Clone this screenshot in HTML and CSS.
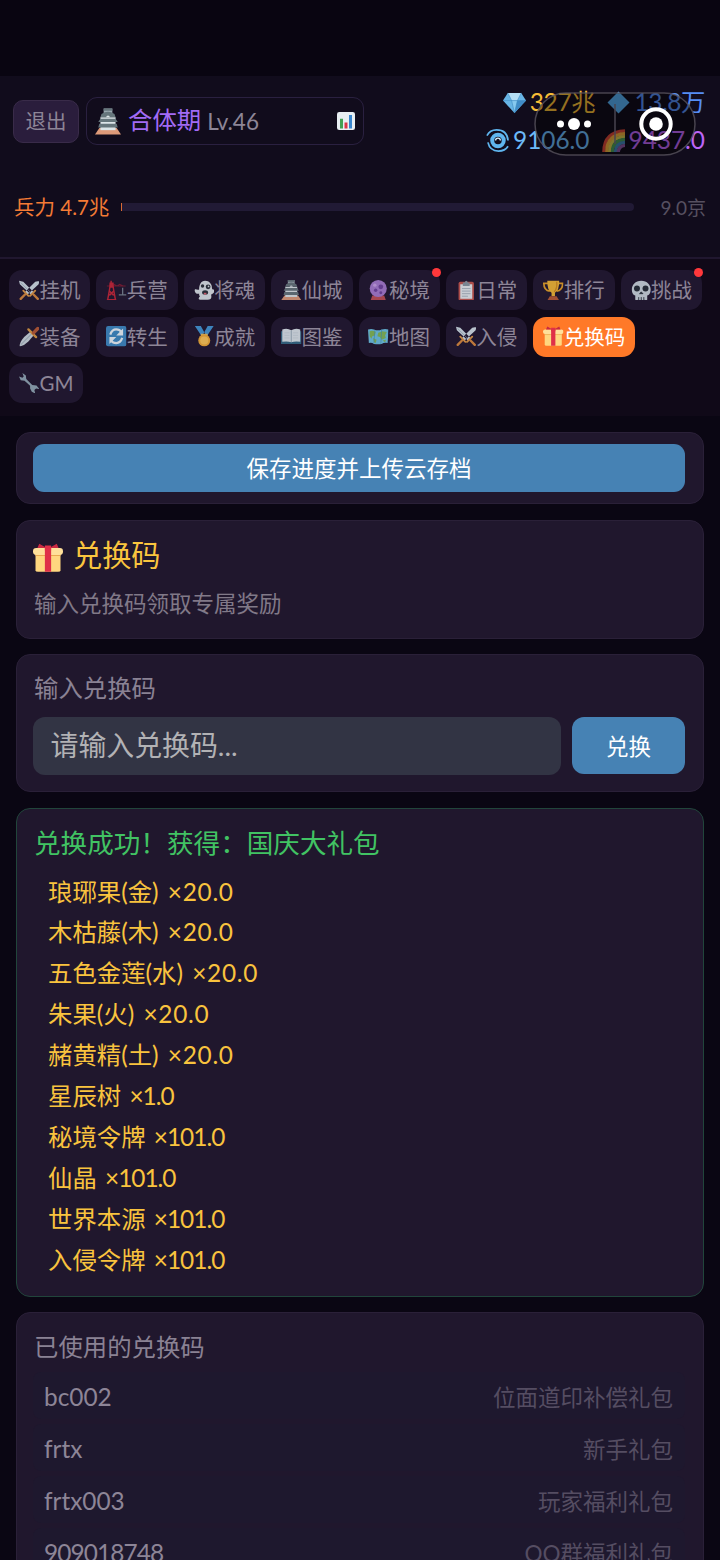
FILE: index.html
```html
<!DOCTYPE html>
<html lang="zh-CN">
<head>
<meta charset="utf-8">
<title>兑换码</title>
<link rel="stylesheet" href="styles.css">
</head>
<body>
<svg class="sprite" aria-hidden="true">
  <symbol id="swords" viewBox="0 0 24 24"><path d="M0 1l5 1 12 12-3 3L1 5zM24 1l-5 1L7 14l3 3L23 5z" fill="#d3e0e8"/><path d="M2 3l12 12" stroke="#8fa5b2" stroke-width=".800"/><path d="M13 18.500l6-6M11 18.500l-6-6" stroke="#e09a48" stroke-width="2.2" stroke-linecap="round"/><path d="M17 17l5 5M7 17l-5 5" stroke="#d98a3e" stroke-width="2.800" stroke-linecap="round"/></symbol>
  <symbol id="crane" viewBox="0 0 24 24"><path d="M6 1v4M2 23L5 6h3l3 17M4 18l5-5M9 18l-5-5M1 23h11" fill="none" stroke="#c52739" stroke-width="1.700"/><path d="M1 7h22M9 5l4 2 3-2 4 2" stroke="#7d1c33" stroke-width="1.200" fill="none"/><path d="M4 3h5v6H4z" fill="#c52739"/><path d="M19.500 9v8M15 17.500h9" stroke="#75818f" stroke-width="1.500"/></symbol>
  <symbol id="ghost" viewBox="0 0 24 24"><path d="M13 1c5 0 8 4 8 8 0 2 1 2 2 2 2 2 0 5-3 6 1 4 0 6-4 6H7c-2 0-2-2 0-4-1-1-1-1-1-3-3 1-6-2-5-5 1-1 3 1 5 0 0-5 2-10 7-10z" fill="#dde4e9"/><circle cx="10" cy="7" r="2" fill="#29313a"/><circle cx="16.500" cy="8" r="2.800" fill="#29313a"/><circle cx="17" cy="7.500" r="1" fill="#dde4e9"/><ellipse cx="13" cy="14.500" rx="3.500" ry="2.600" fill="#29313a"/><path d="M11.500 15h3v2h-3z" fill="#df6170"/></symbol>
  <symbol id="castle" viewBox="0 0 24 24"><path d="M4 18h16l4 6H0z" fill="#dd9a79"/><path d="M5 8h14v12H5z" fill="#dce5e8"/><path d="M8 0h8v6H8z" fill="#9aa8b0"/><path d="M8 0h8v2H8zM6 5q6-4 12 0l1 3H5zM5 9.500h14l2 3H3zM4 14h16l1 3.500H3z" fill="#66767c"/><path d="M10 8q2-3 4 0z" fill="#dce5e8"/></symbol>
  <symbol id="ball" viewBox="0 0 24 24"><path d="M5 18h14l2 6H3z" fill="#bf4f56"/><circle cx="12" cy="10" r="10" fill="#a77bd1"/><circle cx="8" cy="6" r="2" fill="#c7a1e6"/><circle cx="15" cy="8" r="2.800" fill="#7145a1"/><circle cx="9" cy="12" r="2" fill="#7145a1"/><circle cx="15" cy="15" r="1.7" fill="#7145a1"/></symbol>
  <symbol id="clip" viewBox="0 0 24 24"><rect x="3" y="2" width="18" height="22" rx="2" fill="#c6574e"/><path d="M5 5h14v17H5z" fill="#e7edf0"/><path d="M8 3h2q2-4 4 0h2v4H8z" fill="#8999a3"/><path d="M7 10h10M7 13h10M7 16h10M7 19h7" stroke="#a5b2bd" stroke-width="1"/></symbol>
  <symbol id="trophy" viewBox="0 0 24 24"><path d="M6 4H1q0 8 7 9M18 4h5q0 8-7 9" fill="none" stroke="#e5a229" stroke-width="2"/><path d="M5 1h14q0 12-5 14v4h-4v-4Q5 13 5 1z" fill="#f3b936"/><path d="M16 2q1 8-3 12" stroke="#d58e20" stroke-width="1.500" fill="none"/><path d="M8 19h8l3 5H5z" fill="#b85b34"/></symbol>
  <symbol id="skull" viewBox="0 0 24 24"><path d="M12 1c7 0 11 5 11 10 0 4-2 7-4 7v5q-2 1-3 0-2 1-4 0-2 1-4 0-1 1-3 0v-5c-2 0-4-3-4-7C1 6 5 1 12 1z" fill="#cbd6dd"/><circle cx="7" cy="10" r="3.500" fill="#252e38"/><circle cx="17" cy="10" r="3.500" fill="#252e38"/><path d="M10 16l2-2 2 2zM9 20v4M12 20v4M15 20v4" fill="#252e38" stroke="#252e38"/></symbol>
  <symbol id="dagger" viewBox="0 0 24 24"><path d="M1 24q-1-4 5-11l8-7 4 4-7 8Q6 23 1 24z" fill="#ccd8df"/><path d="M2 22L15 9" stroke="#8ea2af" stroke-width="1"/><path d="M11 4l9 9" stroke="#dc9b45" stroke-width="2.800" stroke-linecap="round"/><path d="M17 8l5-5" stroke="#b85b35" stroke-width="4" stroke-linecap="round"/></symbol>
  <symbol id="cycle" viewBox="0 0 24 24"><rect width="24" height="24" rx="2.500" fill="#3e8bc5"/><path d="M5 10q2-6 7-6 4 0 6 3M19 14q-2 6-7 6-4 0-6-3" fill="none" stroke="#edf6fb" stroke-width="2.600"/><path d="M20 3v8h-8zM4 21v-8h8z" fill="#edf6fb"/></symbol>
  <symbol id="medal" viewBox="0 0 24 24"><path d="M1 0h7l5 9-4 3zM23 0h-7l-5 9 4 3z" fill="#4398d6"/><path d="M8 9h8v3H8z" fill="#e9bd5a"/><circle cx="12" cy="17" r="7" fill="#f2ad37"/><circle cx="12" cy="17" r="4.700" fill="#ffc857"/></symbol>
  <symbol id="book" viewBox="0 0 24 24"><path d="M0 6h24v15H0z" fill="#356a87"/><path d="M1.500 4q6-2 10.500 1 4.500-3 10.500-1v14.500q-6-1-10.500.500-4.500-1.500-10.500-.500z" fill="#dce6ec"/><path d="M12 5v14" stroke="#91a5b3" stroke-width="1"/><path d="M4 8h6M4 11h6M4 14h6M14 8h6M14 11h6M14 14h6" stroke="#c2ced6" stroke-width=".700"/></symbol>
  <symbol id="map" viewBox="0 0 24 24"><path d="M0 4q4-1 7 0 5 2 9 0 4-1 8 0l-1 16q-4-1-7 1-4 1-9 0-3-2-6-1z" fill="#6cc3e4"/><path d="M2 6q4-1 7 1l-1 4-3 1-1 3-2-3zM12 8l5-2 5 1-2 4 1 3-5 2-2-3-3-1zM6 14l4 2-1 4-2-1zM17 17l4-1-1 3z" fill="#82ba58"/><path d="M8 5l-1 15M16 4l-1 17" stroke="#4394b5" stroke-width=".700"/></symbol>
  <symbol id="gift" viewBox="0 0 24 24"><path d="M2 8h20v14q0 1-2 1H4q-2 0-2-1z" fill="#ffd77f"/><rect y="4" width="24" height="5.500" rx="2.500" fill="#ffe09a"/><path d="M2 10h20" stroke="#e9a951" stroke-width=".800"/><path d="M9.500 4h5v19h-5z" fill="#df3048"/><path d="M11 4L5 .500 3.500 4zM13 4l6-3.500L20.500 4z" fill="#c92a42"/><path d="M9.500 2h5v4h-5z" fill="#df3048"/></symbol>
  <symbol id="wrench" viewBox="0 0 24 24"><path d="M4 0l4 3 .500 4 7 7 5 .500L24 19l-4-1-2 2 1 4-4-2-2-4V15L6.500 9 2 8.500 0 4l4 1.500L5.500 4z" fill="#91a8b5"/></symbol>
  <symbol id="gem" viewBox="0 0 24 24"><path d="M5 2h14l5 8-12 13L0 10z" fill="#68b5e5"/><path d="M5 2h14l-4 8H9z" fill="#b4def4"/><path d="M9 10h6l-3 13z" fill="#87caef"/><path d="M15 10h9L12 23z" fill="#408cc6"/><path d="M0 10h24M5 2l4 8 3 13 3-13 4-8" fill="none" stroke="#3f8cc2" stroke-width=".600"/></symbol>
  <symbol id="diamond" viewBox="0 0 24 24"><path d="M12 .500L23.500 12 12 23.500.500 12z" fill="#55acee"/></symbol>
  <symbol id="spiral" viewBox="0 0 24 24"><g fill="none" stroke="#5fb5ee"><circle cx="12.500" cy="12" r="6" stroke-width="4.200"/><path d="M1 7Q4 1 11 1q11 0 12 11M23 18q-3 5-10 5Q4 23 2 14" stroke-width="1.800"/></g><path d="M10 12a2.500 2.500 0 0 1 5 0" fill="none" stroke="#d3ecfa" stroke-width="1.400"/></symbol>
  <symbol id="rainbow" viewBox="0 0 24 24"><g fill="none" stroke-width="3.500"><path d="M2 24Q2 3 24 2" stroke="#d54737"/><path d="M5 24Q5 6 24 5" stroke="#eca83c"/><path d="M8 24Q8 9 24 8" stroke="#d4c34b"/><path d="M11 24Q11 12 24 11" stroke="#4b9a57"/><path d="M14 24Q14 15 24 14" stroke="#4284b8"/><path d="M17 24Q17 18 24 17" stroke="#87569f"/></g></symbol>
  <symbol id="chart" viewBox="0 0 24 24"><rect width="24" height="24" rx="3" fill="#e8eef2"/><path d="M4 9h4v13H4z" fill="#43a053"/><path d="M10 14h4v8h-4z" fill="#dc3548"/><path d="M16 4h4v18h-4z" fill="#3986ce"/></symbol>
</svg>

<div class="app">
  <div class="status-bar"></div>
  <header class="header">
    <div class="header-top">
      <button class="exit">退出</button>
      <div class="realm">
        <svg class="realm-icon"><use href="#castle"/></svg>
        <span class="realm-name">合体期</span>
        <span class="realm-level">Lv.46</span>
        <svg class="realm-chart"><use href="#chart"/></svg>
      </div>
      <div class="resources">
        <div class="resource-row">
          <span class="resource gold"><svg><use href="#gem"/></svg>327兆</span>
          <span class="resource blue"><svg><use href="#diamond"/></svg>13.8万</span>
        </div>
        <div class="resource-row">
          <span class="resource cyan"><svg><use href="#spiral"/></svg>9106.0</span>
          <span class="resource purple"><svg><use href="#rainbow"/></svg>9437.0</span>
        </div>
      </div>
    </div>
    <div class="troops">
      <span class="troops-now">兵力 4.7兆</span>
      <div class="bar"><div class="bar-fill"></div></div>
      <span class="troops-max">9.0京</span>
    </div>
    <svg class="capsule" viewBox="0 0 162 64">
      <rect x="1" y="1" width="160" height="62" rx="31" fill="#000" fill-opacity=".4" stroke="#57535c" stroke-opacity=".8" stroke-width="1.500"/>
      <path d="M81 12v40" stroke="#49454f" stroke-width="1.500"/>
      <g fill="#fff"><circle cx="26.500" cy="32" r="3.500"/><circle cx="40" cy="32" r="6"/><circle cx="53.500" cy="32" r="3.500"/><circle cx="122" cy="32" r="6.800"/></g>
      <circle cx="122" cy="32" r="14.700" fill="none" stroke="#fff" stroke-width="4"/>
    </svg>
  </header>

  <nav class="nav">
    <a class="chip"><svg><use href="#swords"/></svg>挂机</a>
    <a class="chip"><svg><use href="#crane"/></svg>兵营</a>
    <a class="chip"><svg><use href="#ghost"/></svg>将魂</a>
    <a class="chip"><svg><use href="#castle"/></svg>仙城</a>
    <a class="chip"><svg><use href="#ball"/></svg>秘境<i class="dot"></i></a>
    <a class="chip"><svg><use href="#clip"/></svg>日常</a>
    <a class="chip"><svg><use href="#trophy"/></svg>排行</a>
    <a class="chip"><svg><use href="#skull"/></svg>挑战<i class="dot"></i></a>
    <a class="chip"><svg><use href="#dagger"/></svg>装备</a>
    <a class="chip"><svg><use href="#cycle"/></svg>转生</a>
    <a class="chip"><svg><use href="#medal"/></svg>成就</a>
    <a class="chip"><svg><use href="#book"/></svg>图鉴</a>
    <a class="chip"><svg><use href="#map"/></svg>地图</a>
    <a class="chip"><svg><use href="#swords"/></svg>入侵</a>
    <a class="chip active"><svg><use href="#gift"/></svg>兑换码</a>
    <a class="chip"><svg><use href="#wrench"/></svg>GM</a>
  </nav>

  <main class="main">
    <section class="card save-card"><button class="save">保存进度并上传云存档</button></section>
    <section class="card title-card">
      <h1 class="title"><svg><use href="#gift"/></svg><span>兑换码</span></h1>
      <p class="subtitle">输入兑换码领取专属奖励</p>
    </section>
    <section class="card form-card">
      <div class="label">输入兑换码</div>
      <div class="form-row">
        <div class="field">请输入兑换码...</div>
        <button class="redeem">兑换</button>
      </div>
    </section>
    <section class="card result-card">
      <div class="result-title">兑换成功！获得：国庆大礼包</div>
      <ul class="rewards">
        <li>琅琊果(金) <b>×20.0</b></li>
        <li>木枯藤(木) <b>×20.0</b></li>
        <li>五色金莲(水) <b>×20.0</b></li>
        <li>朱果(火) <b>×20.0</b></li>
        <li>赭黄精(土) <b>×20.0</b></li>
        <li>星辰树 <b class="ones">×1.0</b></li>
        <li>秘境令牌 <b class="ones">×101.0</b></li>
        <li>仙晶 <b class="ones">×101.0</b></li>
        <li>世界本源 <b class="ones">×101.0</b></li>
        <li>入侵令牌 <b class="ones">×101.0</b></li>
      </ul>
    </section>
    <section class="card used-card">
      <div class="label">已使用的兑换码</div>
      <div class="used"><span>bc002</span><em>位面道印补偿礼包</em></div>
      <div class="used"><span>frtx</span><em>新手礼包</em></div>
      <div class="used"><span>frtx003</span><em>玩家福利礼包</em></div>
      <div class="used"><span class="long">909018748</span><em>QQ群福利礼包</em></div>
    </section>
  </main>
</div>
</body>
</html>
```
FILE: styles.css
```css
* { box-sizing: border-box; }
body {
  margin: 0;
  background: #0a0613;
  font-family: Lato, "Noto Sans CJK SC", sans-serif;
  color: #8d8597;
}
button { font-family: inherit; border: 0; padding: 0; }
svg { flex: none; display: block; }
.sprite { position: absolute; width: 0; height: 0; }
.app { height: 1560px; overflow: hidden; display: flex; flex-direction: column; }
.status-bar { flex: none; height: 76px; background: #090511; }

.header {
  flex: none;
  position: relative;
  height: 183px;
  padding: 7px 14px 0 13px;
  background: #110c1c;
  border-bottom: 2px solid #20172f;
}
.header-top { display: flex; align-items: center; height: 76px; }
.exit {
  width: 66px;
  height: 43px;
  padding-bottom: 2px;
  border: 1px solid #392b49;
  border-radius: 10px;
  background: #2a1d3c;
  color: #8d8597;
  font-size: 20.500px;
}
.realm {
  display: flex;
  align-items: center;
  width: 278px;
  height: 48px;
  margin-left: 7px;
  padding: 0 11px 0 8px;
  border: 1px solid #2a2040;
  border-radius: 11px;
}
.realm-icon { width: 26px; height: 27px; }
.realm-name { margin-left: 7px; color: #a26bf5; font-size: 24.400px; line-height: 40px; padding-bottom: 2px; }
.realm-level { margin-left: 6px; font-size: 22.500px; }
.realm-chart { width: 18px; height: 18px; margin-left: auto; margin-right: -3px; }
.resources { margin-left: auto; margin-right: 1px; }
.resource-row { display: flex; justify-content: flex-end; gap: 12px; height: 38px; align-items: center; }
.resource { display: flex; align-items: center; gap: 4px; font-size: 24.400px; line-height: 38px; }
.resource svg { width: 23px; height: 23px; }
.gold { color: #f7bd36; letter-spacing: -.300px; }
.blue { color: #568df4; letter-spacing: -.400px; }
.cyan { color: #6dbaf8; }
.purple { color: #bd65f7; }
.troops { display: flex; align-items: center; height: 30px; margin-top: 33px; font-size: 20.500px; }
.troops-now { width: 108px; padding: 0 0 2px 1px; color: #f37b35; white-space: nowrap; }
.bar { width: 513px; height: 8px; background: #211a35; border-radius: 0 4px 4px 0; overflow: hidden; }
.bar-fill { width: 1px; height: 8px; background: #d86a34; }
.troops-max { margin-left: auto; padding-bottom: 1px; color: #565060; font-size: 19px; }
.capsule { position: absolute; left: 534px; top: 16px; width: 162px; height: 64px; }

.nav {
  flex: none;
  height: 157px;
  padding: 11px 9px 0;
  display: flex;
  flex-wrap: wrap;
  align-content: flex-start;
  gap: 6.600px 6px;
  background: #100918;
}
.chip {
  position: relative;
  display: flex;
  align-items: center;
  height: 40px;
  padding: 0 9.950px;
  border-radius: 13px;
  background: #20172f;
  font-size: 20.500px;
  line-height: 40px;
}
.chip svg { width: 20.500px; height: 20.500px; opacity: .85; }
.active { background: #ff7928; color: #fff; }
.active svg { opacity: 1; }
.dot { position: absolute; right: -1px; top: -2px; width: 9px; height: 9px; border-radius: 50%; background: #ff383b; }

.main { flex: none; padding: 16px; display: flex; flex-direction: column; gap: 15.500px; }
.card { border: 1px solid #2a2038; border-radius: 14px; background: #20172d; padding: 0 18px 0 16px; }
.save-card { height: 72px; padding-top: 11px; }
.save { display: block; width: 100%; height: 48px; padding-bottom: 2px; border-radius: 11px; background: #4682b4; color: #fff; font-size: 22.500px; }
.title-card { height: 119px; padding-top: 15px; }
.title { display: flex; align-items: center; gap: 10px; margin: 0; height: 44px; color: #fac53e; font-size: 29.200px; font-weight: 400; line-height: 38px; }
.title svg { width: 30px; height: 30px; }
.title span { padding-bottom: 5px; }
.subtitle { margin: 7px 0 0; padding-left: 1px; font-size: 22.500px; line-height: 34px; color: #817988; }
.form-card { height: 138px; }
.label { padding-left: 1px; font-size: 24.400px; line-height: 36px; color: #8a8294; }
.form-card .label { padding-top: 15px; }
.form-row { display: flex; gap: 11px; margin-top: 11px; }
.field { flex: 1; height: 58px; padding-left: 17.500px; border-radius: 12px; background: #323444; color: #b2b2b5; font-size: 27.900px; line-height: 57px; }
.redeem { width: 113px; height: 57px; padding-bottom: 2px; border-radius: 12px; background: #4682b4; color: #fff; font-size: 22.500px; }
.result-card { height: 489px; padding-top: 15px; border-color: #21453b; }
.result-title { padding-left: 1px; color: #41c363; font-size: 26.600px; line-height: 39px; white-space: nowrap; }
.rewards { margin: 8px 0 0; padding: 0 0 0 15px; list-style: none; color: #f9c33e; font-size: 24.400px; }
.rewards li { height: 40.950px; line-height: 42px; white-space: nowrap; }
.rewards b { font-weight: 400; margin-left: 3px; letter-spacing: .700px; }
.rewards .ones { margin-left: 2px; letter-spacing: -1px; }
.used-card { height: 300px; padding-top: 16px; display: flex; flex-direction: column; gap: 5px; }
.used-card .label { margin-bottom: 2px; }
.used { display: flex; flex: none; align-items: center; justify-content: space-between; height: 47px; padding: 0 12px 0 11px; border-radius: 8px; background: #1e182e; }
.used span { padding-top: 2px; font-size: 24.400px; }
.used .long { letter-spacing: -.900px; }
.used em { font-style: normal; font-size: 22.500px; color: #554d62; }
```
